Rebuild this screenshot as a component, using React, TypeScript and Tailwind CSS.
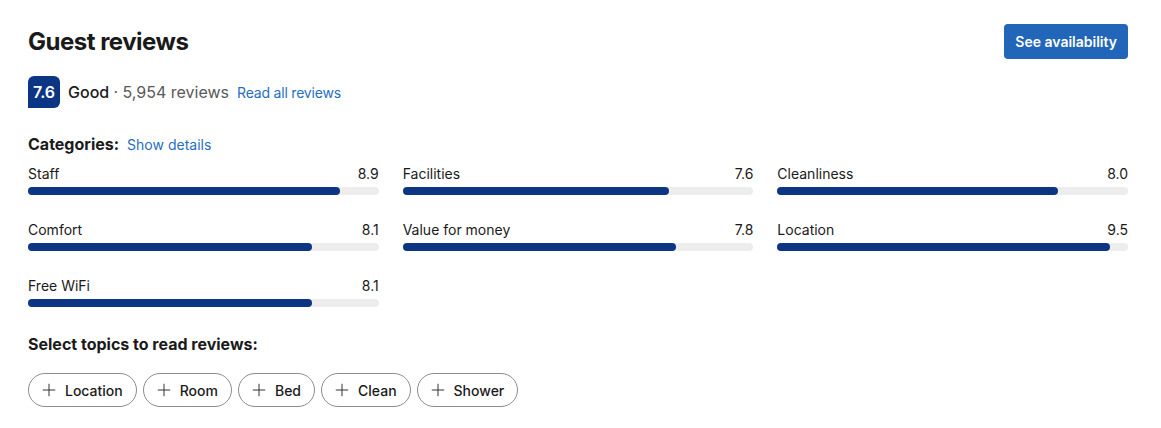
import { Plus } from 'lucide-react';

const CATEGORIES = [
  { label: 'Staff', score: 8.9 },
  { label: 'Facilities', score: 7.6 },
  { label: 'Cleanliness', score: 8.0 },
  { label: 'Comfort', score: 8.1 },
  { label: 'Value for money', score: 7.8 },
  { label: 'Location', score: 9.5 },
  { label: 'Free WiFi', score: 8.1 },
];

const TOPICS = ['Location', 'Room', 'Bed', 'Clean', 'Shower'];

export default function App() {
  return (
    <div className="min-h-screen bg-white pl-7 pr-[33px] pt-6 text-[#1a1a1a] [font-family:Inter,'Noto_Sans',sans-serif]">
      <div className="flex items-start justify-between">
        <h2 className="pt-[3px] text-[24px] font-bold leading-[30px] tracking-[-0.5px]">Guest reviews</h2>
        <button
          type="button"
          className="h-[35px] rounded-[4px] bg-[#2166b8] px-[11px] text-[14px] font-semibold text-white"
        >
          See availability
        </button>
      </div>

      <div className="mt-[17px] flex items-center gap-2">
        <div className="flex h-8 w-8 items-center justify-center rounded-[6px] rounded-bl-none bg-[#0c3683] text-[16px] font-semibold text-white">
          7.6
        </div>
        <p className="text-[16px] font-medium">
          Good <span className="font-normal text-[#595959]">· 5,954 reviews</span>
        </p>
        <a href="#" className="text-[14px] tracking-[-0.2px] text-[#1f6fc4]">
          Read all reviews
        </a>
      </div>

      <div className="mt-[24px] flex items-baseline gap-2">
        <h3 className="text-[16px] font-bold">Categories:</h3>
        <a href="#" className="text-[14px] text-[#1f6fc4]">
          Show details
        </a>
      </div>

      <div className="mt-[8px] grid grid-cols-3 gap-x-6 gap-y-[25px]">
        {CATEGORIES.map((c) => (
          <ScoreBar key={c.label} label={c.label} score={c.score} />
        ))}
      </div>

      <h3 className="mt-[25px] text-[16px] font-bold">Select topics to read reviews:</h3>

      <div className="mt-[17px] flex gap-1.5">
        {TOPICS.map((t) => (
          <button
            key={t}
            type="button"
            className="flex h-[34px] items-center gap-[6px] rounded-full border border-[#8c8c8c] pl-[10px] pr-[13px] text-[14px] font-medium"
          >
            <Plus size={20} strokeWidth={1.2} className="text-[#333]" />
            {t}
          </button>
        ))}
      </div>
    </div>
  );
}

function ScoreBar({ label, score }: { label: string; score: number }) {
  return (
    <div>
      <div className="flex items-center justify-between text-[14px] leading-5">
        <span>{label}</span>
        <span>{score.toFixed(1)}</span>
      </div>
      <div className="mt-[3px] h-2 rounded-full bg-[#ededed]">
        <div
          className="h-2 rounded-full bg-[#0c3683]"
          style={{ width: `${score * 10}%` }}
        />
      </div>
    </div>
  );
}
